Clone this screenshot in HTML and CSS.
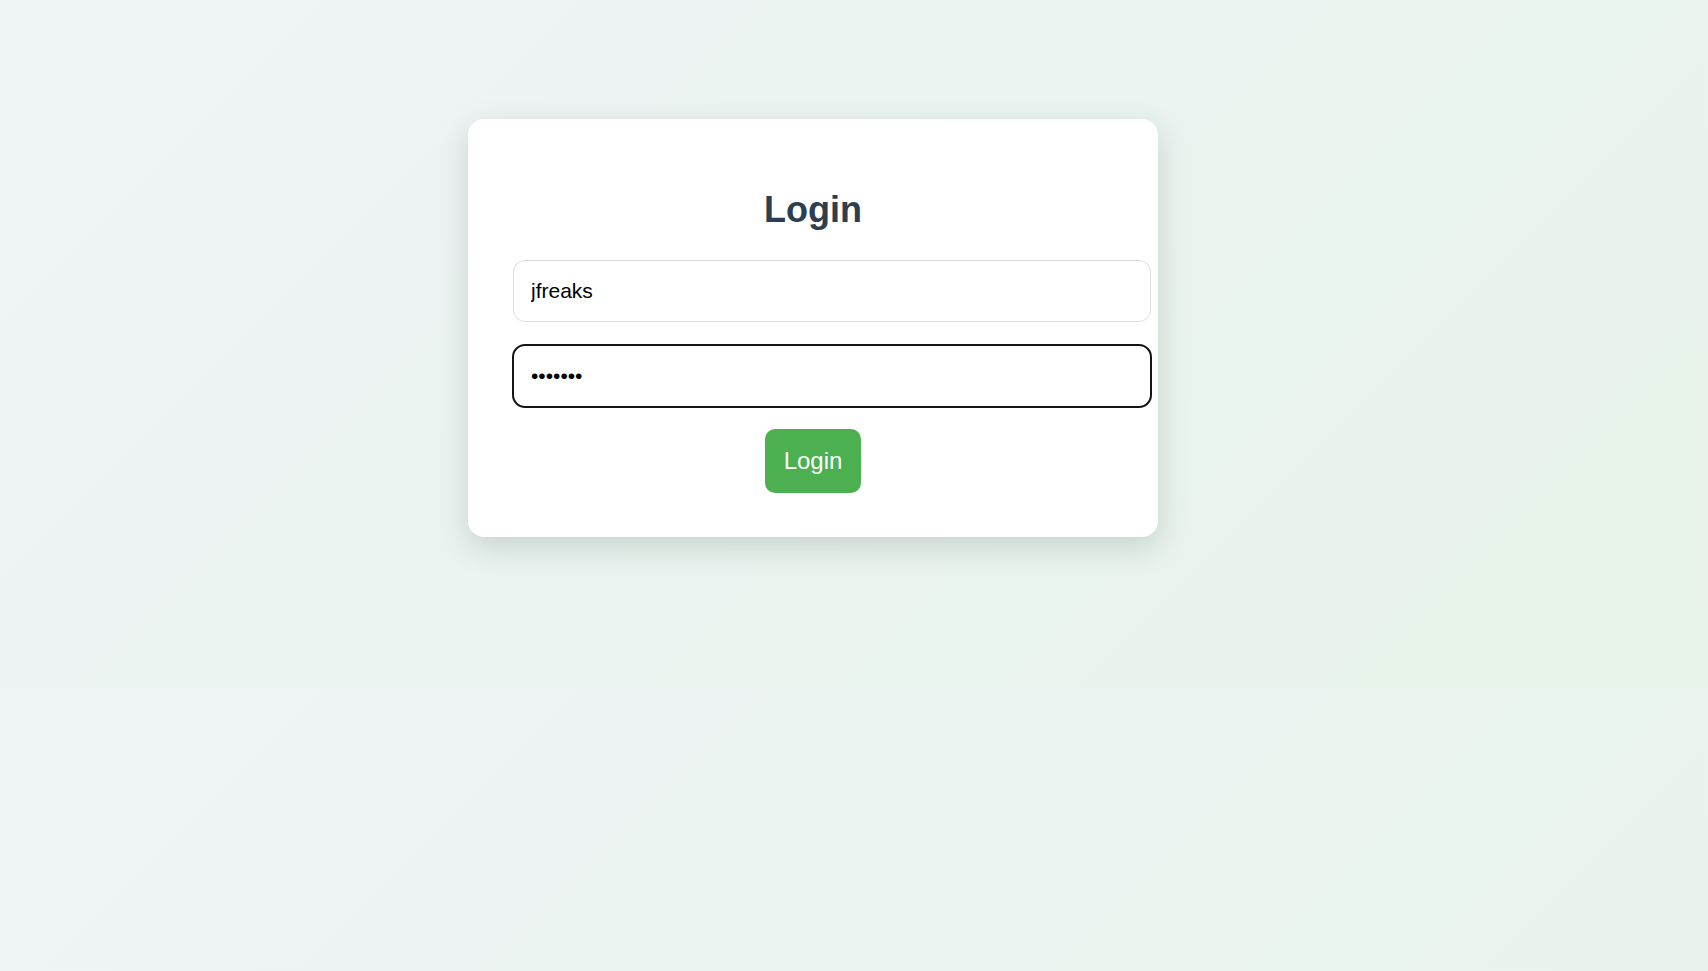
FILE: index.html
```html
<!DOCTYPE html>
<html>
<head>
<meta charset="utf-8">
<title>Login</title>
<link rel="stylesheet" href="styles.css">
</head>
<body>
    <div id="page">
        <div class="card">
            <h2>Login</h2>
            <form class="login">
                <input type="text" class="field" value="jfreaks">
                <input type="password" class="field focused" value="1234567">
                <div class="actions">
                    <button type="button" class="btn">Login</button>
                </div>
            </form>
        </div>
    </div>
</body>
</html>
```

FILE: styles.css
```css
html { background: linear-gradient(135deg, #eff5f5, #ebf3f1 40%, #e8f3e9) 0 0 / 100% 688px repeat; }
body { margin: 0; font-family: "Liberation Sans", Arial, sans-serif; }

#page { box-sizing: border-box; min-height: 100vh; display: flex; justify-content: center; align-items: flex-start; padding: 119px 82px 0 0; }

.card { width: 600px; padding: 45px 45px 44px; background: #fff; border-radius: 16px; box-shadow: 0 10px 30px rgba(40, 70, 55, 0.18); }
.card h2 { margin: 26px 0 30px; font-size: 36px; line-height: 40px; font-weight: bold; color: #2c3e50; text-align: center; }

.login .field { display: block; box-sizing: content-box; width: 100%; margin: 0 0 23px; padding: 18px 19px 18px 17px; font: 21px/24px "Liberation Sans", Arial, sans-serif; color: #000; background: #fff; border: 1px solid #dcdcdc; border-radius: 12px; outline: none; }
.login .field.focused { outline: 2.5px solid #141414; outline-offset: -1.5px; margin-bottom: 22px; }

.actions { text-align: center; }
.btn { padding: 18px 18.5px; font: 24px/28px "Liberation Sans", Arial, sans-serif; color: #fff; background: #4caf50; border: 0; border-radius: 10px; cursor: pointer; }
.btn:hover { background: #45a049; }
```
